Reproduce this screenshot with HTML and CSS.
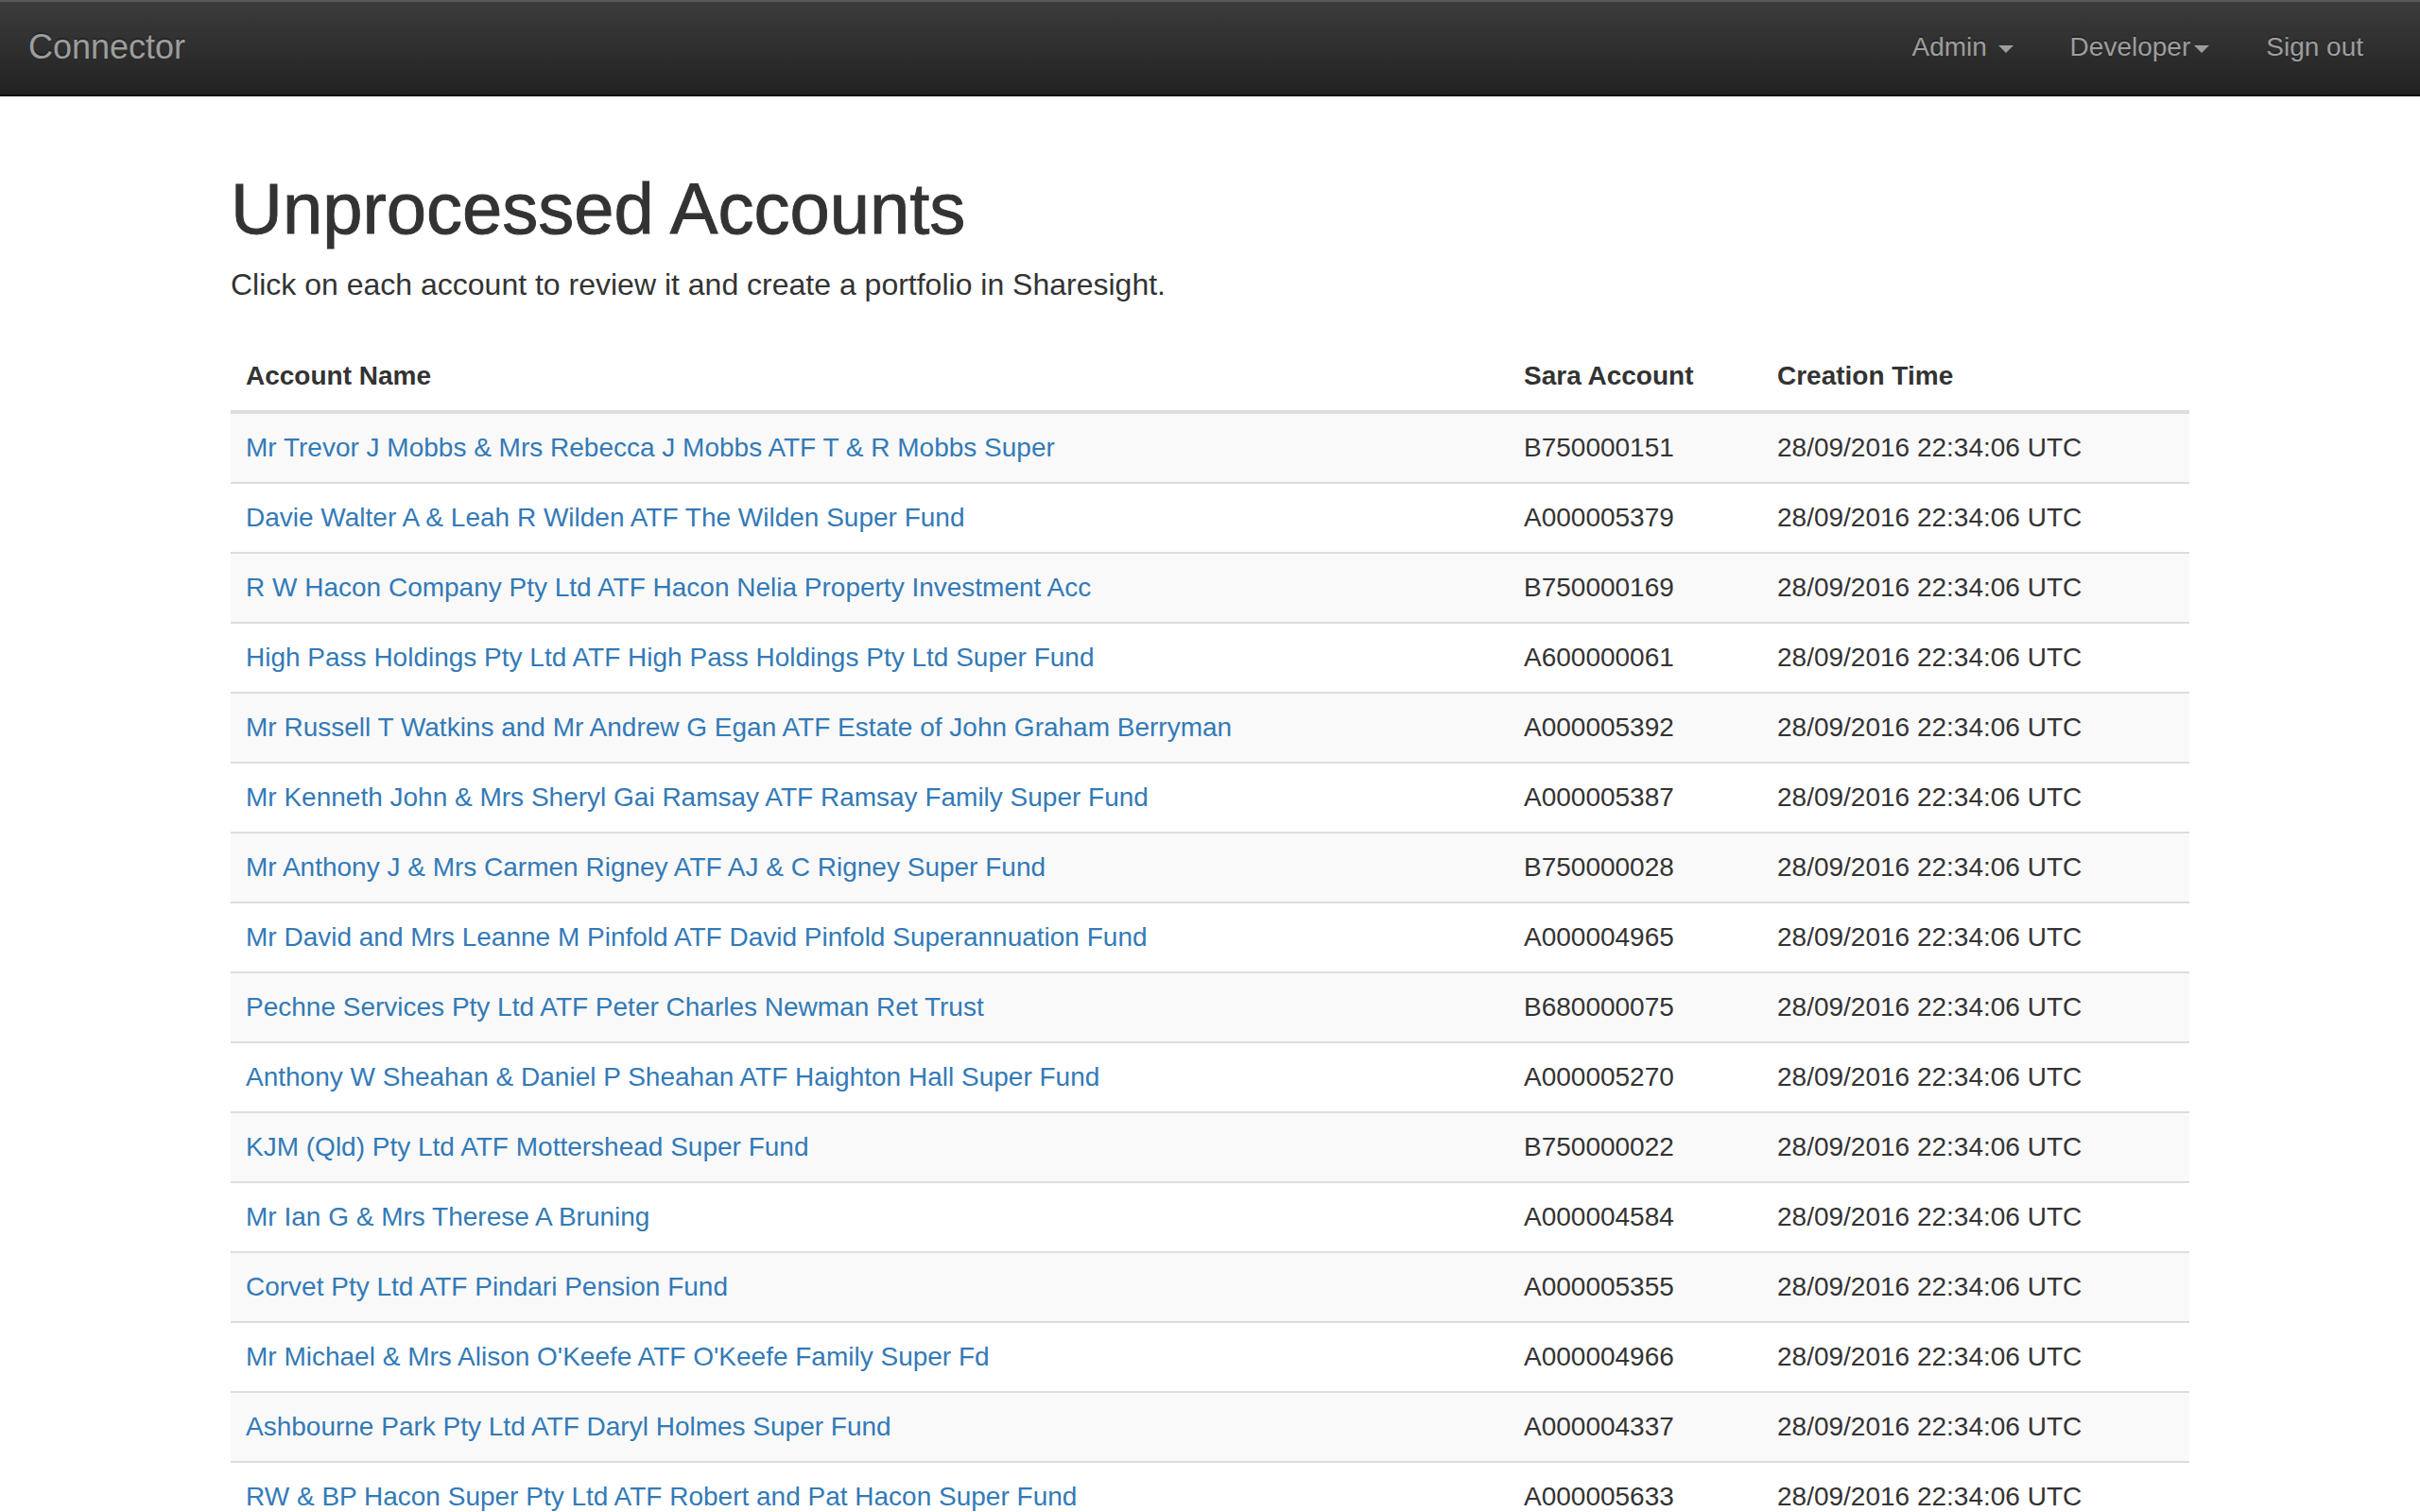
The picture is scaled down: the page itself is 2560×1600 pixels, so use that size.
FILE: index.html
```html
<!DOCTYPE html>
<html lang="en">
<head>
<meta charset="utf-8">
<title>Connector</title>
<link rel="stylesheet" href="styles.css">
</head>
<body>
<nav class="navbar">
  <a class="brand" href="#">Connector</a>
  <ul class="nav">
    <li><a href="#">Admin <span class="caret"></span></a></li>
    <li><a href="#">Developer<span class="caret"></span></a></li>
    <li><a href="#">Sign out</a></li>
  </ul>
</nav>
<main class="container">
  <h1 class="title">Unprocessed Accounts</h1>
  <p class="lead">Click on each account to review it and create a portfolio in Sharesight.</p>
  <table class="accounts">
    <thead>
      <tr><th class="col-name">Account Name</th><th class="col-sara">Sara Account</th><th class="col-time">Creation Time</th></tr>
    </thead>
    <tbody>
      <tr><td><a href="#">Mr Trevor J Mobbs &amp; Mrs Rebecca J Mobbs ATF T &amp; R Mobbs Super</a></td><td>B750000151</td><td>28/09/2016 22:34:06 UTC</td></tr>
      <tr><td><a href="#">Davie Walter A &amp; Leah R Wilden ATF The Wilden Super Fund</a></td><td>A000005379</td><td>28/09/2016 22:34:06 UTC</td></tr>
      <tr><td><a href="#">R W Hacon Company Pty Ltd ATF Hacon Nelia Property Investment Acc</a></td><td>B750000169</td><td>28/09/2016 22:34:06 UTC</td></tr>
      <tr><td><a href="#">High Pass Holdings Pty Ltd ATF High Pass Holdings Pty Ltd Super Fund</a></td><td>A600000061</td><td>28/09/2016 22:34:06 UTC</td></tr>
      <tr><td><a href="#">Mr Russell T Watkins and Mr Andrew G Egan ATF Estate of John Graham Berryman</a></td><td>A000005392</td><td>28/09/2016 22:34:06 UTC</td></tr>
      <tr><td><a href="#">Mr Kenneth John &amp; Mrs Sheryl Gai Ramsay ATF Ramsay Family Super Fund</a></td><td>A000005387</td><td>28/09/2016 22:34:06 UTC</td></tr>
      <tr><td><a href="#">Mr Anthony J &amp; Mrs Carmen Rigney ATF AJ &amp; C Rigney Super Fund</a></td><td>B750000028</td><td>28/09/2016 22:34:06 UTC</td></tr>
      <tr><td><a href="#">Mr David and Mrs Leanne M Pinfold ATF David Pinfold Superannuation Fund</a></td><td>A000004965</td><td>28/09/2016 22:34:06 UTC</td></tr>
      <tr><td><a href="#">Pechne Services Pty Ltd ATF Peter Charles Newman Ret Trust</a></td><td>B680000075</td><td>28/09/2016 22:34:06 UTC</td></tr>
      <tr><td><a href="#">Anthony W Sheahan &amp; Daniel P Sheahan ATF Haighton Hall Super Fund</a></td><td>A000005270</td><td>28/09/2016 22:34:06 UTC</td></tr>
      <tr><td><a href="#">KJM (Qld) Pty Ltd ATF Mottershead Super Fund</a></td><td>B750000022</td><td>28/09/2016 22:34:06 UTC</td></tr>
      <tr><td><a href="#">Mr Ian G &amp; Mrs Therese A Bruning</a></td><td>A000004584</td><td>28/09/2016 22:34:06 UTC</td></tr>
      <tr><td><a href="#">Corvet Pty Ltd ATF Pindari Pension Fund</a></td><td>A000005355</td><td>28/09/2016 22:34:06 UTC</td></tr>
      <tr><td><a href="#">Mr Michael &amp; Mrs Alison O'Keefe ATF O'Keefe Family Super Fd</a></td><td>A000004966</td><td>28/09/2016 22:34:06 UTC</td></tr>
      <tr><td><a href="#">Ashbourne Park Pty Ltd ATF Daryl Holmes Super Fund</a></td><td>A000004337</td><td>28/09/2016 22:34:06 UTC</td></tr>
      <tr><td><a href="#">RW &amp; BP Hacon Super Pty Ltd ATF Robert and Pat Hacon Super Fund</a></td><td>A000005633</td><td>28/09/2016 22:34:06 UTC</td></tr>
    </tbody>
  </table>
</main>
</body>
</html>
```

FILE: styles.css
```css
* { box-sizing: border-box; }
html, body { margin: 0; padding: 0; }
body {
  font-family: "Liberation Sans", Arial, Helvetica, sans-serif;
  font-size: 28px;
  line-height: 40px;
  color: #333;
  background: #fff;
}
a { text-decoration: none; }

.navbar {
  display: flex;
  align-items: center;
  justify-content: space-between;
  height: 102px;
  background: linear-gradient(to bottom, #3c3c3c 0, #222 100%);
  border-bottom: 2px solid #080808;
  box-shadow: inset 0 2px 0 rgba(255,255,255,.15);
}
.brand {
  padding: 30px 30px;
  font-size: 36px;
  line-height: 40px;
  color: #9d9d9d;
  text-shadow: 0 -2px 0 rgba(0,0,0,.25);
}
.nav {
  display: flex;
  list-style: none;
  margin: 0 30px 0 0;
  padding: 0;
}
.nav a {
  display: block;
  padding: 30px 30px;
  line-height: 40px;
  font-size: 28px;
  color: #9d9d9d;
  text-shadow: 0 -2px 0 rgba(0,0,0,.25);
}
.caret {
  display: inline-block;
  width: 0;
  height: 0;
  margin-left: 4px;
  vertical-align: middle;
  border-top: 8px solid;
  border-left: 8px solid transparent;
  border-right: 8px solid transparent;
}

.container {
  width: 2072px;
  margin: 0 auto;
  padding-top: 40px;
}
.title {
  margin: 37px 0 15px;
  font-size: 76px;
  line-height: 1.1;
  font-weight: 500;
  color: #333;
  -webkit-text-stroke: 0.9px #333;
}
.lead {
  margin: 0 0 38px;
  font-size: 32px;
  line-height: 46px;
}
.accounts {
  width: 100%;
  border-collapse: collapse;
  border-spacing: 0;
  table-layout: fixed;
}
.accounts th, .accounts td {
  padding: 16px;
  text-align: left;
  vertical-align: top;
  line-height: 40px;
}
.accounts th {
  font-weight: bold;
  border-bottom: 4px solid #ddd;
}
.accounts td {
  border-top: 2px solid #ddd;
}
.accounts tbody tr:nth-child(odd) { background: #f9f9f9; }
.accounts td a { color: #337ab7; }
.col-name { width: 1352px; }
.col-sara { width: 268px; }
.col-time { width: 452px; }
```
